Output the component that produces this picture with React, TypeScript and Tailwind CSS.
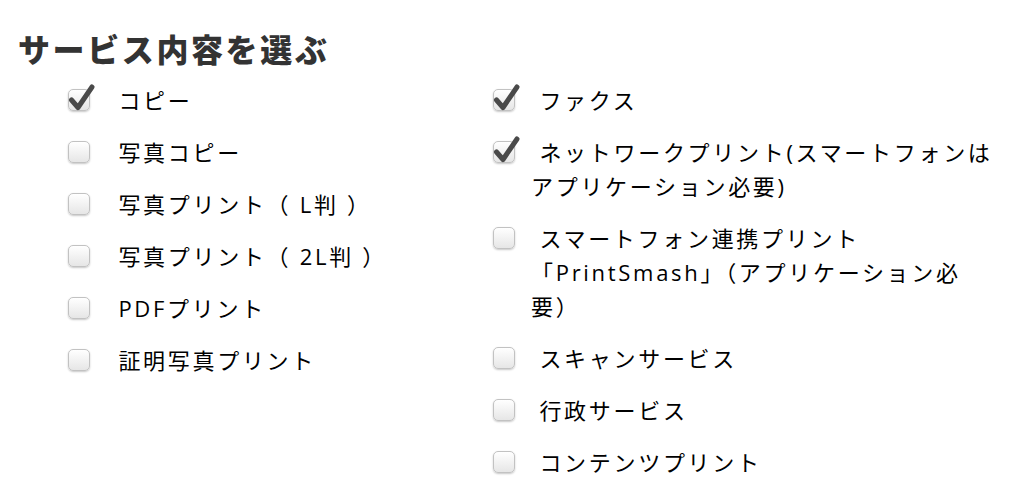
// Imports
import React from "react";

// Types
interface ServiceItem {
    lines: string[];
    checked: boolean;
}

const leftItems: ServiceItem[] = [
    { lines: [" コピー"], checked: true },
    { lines: [" 写真コピー"], checked: false },
    { lines: [" 写真プリント（ L判 ）"], checked: false },
    { lines: [" 写真プリント（ 2L判 ）"], checked: false },
    { lines: [" PDFプリント"], checked: false },
    { lines: [" 証明写真プリント"], checked: false },
];

const rightItems: ServiceItem[] = [
    { lines: [" ファクス"], checked: true },
    { lines: [" ネットワークプリント(スマートフォンは", "アプリケーション必要)"], checked: true },
    { lines: [" スマートフォン連携プリント", "「PrintSmash」（アプリケーション必", "要）"], checked: false },
    { lines: [" スキャンサービス"], checked: false },
    { lines: [" 行政サービス"], checked: false },
    { lines: [" コンテンツプリント"], checked: false },
];

// Checkbox
function CheckBox({ checked }: { checked: boolean }) {
    return (
        <span className="relative mt-[6px] block w-[22px] h-[22px] shrink-0 rounded-[5px] border border-[#c2c2c2] bg-gradient-to-b from-white to-[#e6e6e6] shadow-[0_1px_2px_rgba(0,0,0,0.22)]">
            {checked && (
                <svg className="absolute left-[-1px] top-[-6px] w-[28px] h-[28px]" viewBox="0 0 28 28">
                    <path d="M3.5 16 L10 23.5 L24 3" fill="none" stroke="#4a4a4a" strokeWidth="5" strokeLinecap="round" strokeLinejoin="round" />
                </svg>
            )}
        </span>
    );
}

// Row
function ServiceRow({ item, indent }: { item: ServiceItem; indent: string }) {
    return (
        <li className="flex items-start">
            <CheckBox checked={item.checked} />
            <span className={`${indent} flex flex-col whitespace-pre`}>
                {item.lines.map((line, i) => (
                    <span key={i} className="leading-[34px]">{line}</span>
                ))}
            </span>
        </li>
    );
}

export default function App() {
    return (
        <div className="w-[1024px] h-[502px] bg-white overflow-hidden pl-[18px] pt-[28px] text-[#000] font-['Open_Sans','Noto_Sans_CJK_JP',sans-serif]">
            <h2 className="text-[32px] leading-[40px] font-black tracking-[2.6px] text-[#333] font-['Noto_Sans_CJK_JP',sans-serif]">サービス内容を選ぶ</h2>

            <div className="flex mt-[15px] pl-[50px] text-[22px] font-normal tracking-[2.7px]">
                {/* Left column */}
                <ul className="w-[425px] flex flex-col gap-[18px]">
                    {leftItems.map((item, i) => (
                        <ServiceRow key={i} item={item} indent="ml-[20px]" />
                    ))}
                </ul>

                {/* Right column */}
                <ul className="flex flex-col gap-[18px]">
                    {rightItems.map((item, i) => (
                        <ServiceRow key={i} item={item} indent="ml-[16px]" />
                    ))}
                </ul>
            </div>
        </div>
    );
}
